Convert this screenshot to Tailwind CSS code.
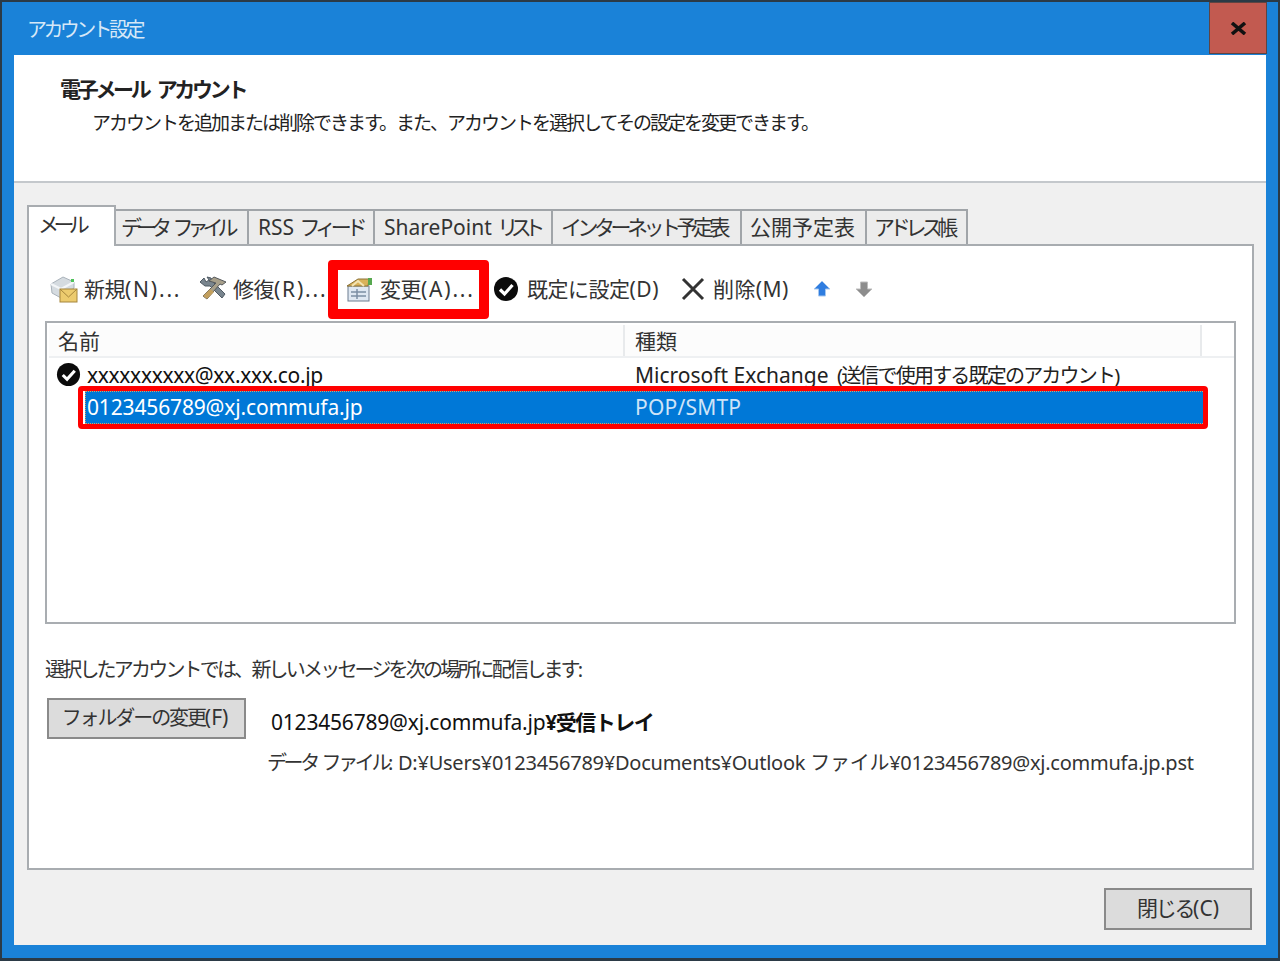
<!DOCTYPE html>
<html lang="ja">
  <head>
    <meta charset="UTF-8">
    <script src="https://cdn.jsdelivr.net/npm/@tailwindcss/browser@4"></script>
    <title>アカウント設定</title>
  </head>
  <body class="m-0 bg-[#1a82d8] font-['Noto_Sans','Noto_Sans_CJK_JP',sans-serif] text-[#111]">
    <div class="relative w-[1280px] h-[961px] flex flex-col border-2 border-b-[3px] border-[#2b3a46] bg-[#1a82d8] overflow-hidden">
      <!-- Title bar -->
      <div class="h-[53px] flex shrink-0">
        <div class="flex-1 pl-[25px] pt-[13px] text-[20px] leading-[30px] tracking-[-3.6px] text-[#d6e8f7]">アカウント設定</div>
        <div class="w-[58px] h-[52px] mr-[11px] flex items-center justify-center bg-[#c25a50] border border-[#5e4442]">
          <svg width="17" height="13" viewBox="0 0 17 13"><path d="M2 1 L15 12 M15 1 L2 12" stroke="#111" stroke-width="3.6" fill="none"/></svg>
        </div>
      </div>

      <div class="mx-[12px] flex-1 flex flex-col mb-[13px] bg-[#f0f0f0]">
        <!-- Header -->
        <div class="h-[128px] shrink-0 bg-white border-b-2 border-[#c4c8cc] pl-[46px] pt-[19px]">
          <div class="text-[21px] leading-[30px] font-bold tracking-[-3.3px] [word-spacing:6px] text-[#222]">電子メール アカウント</div>
          <div class="pl-[32px] mt-[4px] text-[19px] leading-[30px] tracking-[-2px] text-[#222]">アカウントを追加または削除できます。また、アカウントを選択してその設定を変更できます。</div>
        </div>

        <!-- Tabs -->
        <div class="pl-[13px] flex items-end h-[61px] shrink-0 text-[21px] leading-[30px] text-[#333]">
          <div class="relative z-10 w-[89px] h-[41px] -mb-[2px] bg-white border-2 border-b-0 border-[#a8acb0] pl-[9px] pt-[2px] tracking-[-5.6px]">メール</div>
          <div class="w-[133px] h-[35px] bg-[#ececec] border-2 border-b-0 border-l-0 border-[#a0a4a8] pl-[5px] pt-[1px] whitespace-nowrap tracking-[-6px] [word-spacing:7px]">データ ファイル</div>
          <div class="w-[126px] h-[35px] bg-[#ececec] border-2 border-b-0 border-l-0 border-[#a0a4a8] pl-[9px] pt-[1px] whitespace-nowrap">RSS <span class="tracking-[-5.2px]">フィード</span></div>
          <div class="w-[178px] h-[35px] bg-[#ececec] border-2 border-b-0 border-l-0 border-[#a0a4a8] pl-[9px] pt-[1px] whitespace-nowrap">SharePoint <span class="tracking-[-7.5px]">リスト</span></div>
          <div class="w-[189px] h-[35px] bg-[#ececec] border-2 border-b-0 border-l-0 border-[#a0a4a8] pl-[8px] pt-[1px] whitespace-nowrap tracking-[-4.5px]">インターネット予定表</div>
          <div class="w-[125px] h-[35px] bg-[#ececec] border-2 border-b-0 border-l-0 border-[#a0a4a8] pl-[8px] pt-[1px] whitespace-nowrap">公開予定表</div>
          <div class="w-[101px] h-[35px] bg-[#ececec] border-2 border-b-0 border-l-0 border-[#a0a4a8] pl-[7px] pt-[1px] whitespace-nowrap tracking-[-5.2px]">アドレス帳</div>
        </div>

        <!-- Tab panel -->
        <div class="mx-[13px] w-[1227px] h-[626px] shrink-0 bg-white border-2 border-[#a8acb0] flex flex-col">
          <!-- Toolbar -->
          <div class="h-[75px] shrink-0 pl-[20px] pt-[10px] flex text-[21px] leading-[32px] text-[#333] whitespace-nowrap">
            <div class="w-[149px] flex items-center">
              <svg class="w-[30px] h-[30px] mr-[5px]" viewBox="0 0 30 30">
                <path d="M2 10 L14 3 L25 8 L25 14 L12 24 L3 19 Z" fill="#d5dbe0" stroke="#a9b2ba"/>
                <path d="M2 10 L12 15 L25 8" fill="none" stroke="#f4f6f8" stroke-width="2"/>
                <rect x="11" y="15" width="17" height="13" fill="#eccb6e" stroke="#a5853c"/>
                <path d="M11 15 L19.5 23 L28 15" fill="none" stroke="#a5853c"/>
                <rect x="22" y="5" width="3" height="3" fill="#4fc25a"/>
              </svg>
              <span class="tracking-[-0.5px]">新規<span class="tracking-[1.8px]">(N)...</span></span>
            </div>
            <div class="w-[147px] flex items-center">
              <svg class="w-[30px] h-[30px] mr-[5px]" viewBox="0 0 30 30">
                <path d="M2 8 L6 4 L8 8 L11 6 L9 3 L13 4 L15 8 L27 20 L24 24 L12 12 L7 12 Z" fill="#79858e" stroke="#4f5a63"/>
                <path d="M11 7 L16 3 L28 8 L24 11 L22 10 L9 25 L5 22 L18 9 Z" fill="#a79f8a" stroke="#54585c"/>
                <path d="M9 25 L5 22 L12 15 L16 18 Z" fill="#c29f5e"/>
              </svg>
              <span class="tracking-[-0.5px]">修復<span class="tracking-[1.8px]">(R)...</span></span>
            </div>
            <div class="w-[148px] flex items-center">
              <svg class="w-[29px] h-[28px] mr-[6px]" viewBox="0 0 29 28">
                <rect x="3" y="11" width="21" height="15" fill="#dfe8f2" stroke="#6c7d90"/>
                <path d="M6 17 H21 M6 21 H21 M12 14 V24" stroke="#7c8ea4" stroke-width="1.5"/>
                <path d="M2 11 L13 4 L24 4 L23 11 Z" fill="#d9b25a" stroke="#8c7236"/>
                <path d="M7 11 L13 6 L19 11" fill="none" stroke="#f2e4b4" stroke-width="2"/>
                <rect x="23" y="3" width="4" height="7" fill="#57a84f"/>
              </svg>
              <span class="tracking-[-0.5px]">変更<span class="tracking-[1.8px]">(A)...</span></span>
            </div>
            <div class="w-[188px] flex items-center">
              <svg class="w-[26px] h-[26px] mr-[8px]" viewBox="0 0 26 26">
                <circle cx="13" cy="13" r="12" fill="#0b0b0b"/>
                <path d="M7 13.5 L11.5 18 L19.5 9" fill="none" stroke="#fff" stroke-width="3.2"/>
              </svg>
              <span class="tracking-[-0.5px]">既定に設定<span class="tracking-[0.5px]">(D)</span></span>
            </div>
            <div class="w-[132px] flex items-center">
              <svg class="w-[24px] h-[24px] mr-[8px]" viewBox="0 0 24 24">
                <path d="M2 2 L22 22 M22 2 L2 22" stroke="#333" stroke-width="3" fill="none"/>
              </svg>
              <span class="tracking-[0.4px]">削除(M)</span>
            </div>
            <div class="w-[42px] flex items-center">
              <svg class="w-[18px] h-[18px]" viewBox="0 0 18 18">
                <path d="M9 1 L17 9 L12.5 9 L12.5 16 L5.5 16 L5.5 9 L1 9 Z" fill="#2f7de0" stroke="#a7c8ef"/>
              </svg>
            </div>
            <div class="flex items-center">
              <svg class="w-[18px] h-[18px]" viewBox="0 0 18 18">
                <path d="M5.5 2 L12.5 2 L12.5 9 L17 9 L9 17 L1 9 L5.5 9 Z" fill="#8d8d8d" stroke="#bdbdbd"/>
              </svg>
            </div>
          </div>

          <!-- Account list -->
          <div class="relative mx-[16px] h-[303px] shrink-0 border-2 border-[#a9adb1] pl-[2px] pt-[2px]">
            <div class="flex h-[33px] border-b-2 border-[#eef0f2] text-[21px] leading-[32px] text-[#333]">
              <div class="w-[576px] pl-[9px] border-r-2 border-[#e8eaec] bg-[#fcfcfc]">名前</div>
              <div class="w-[577px] pl-[10px] border-r-2 border-[#e8eaec] bg-[#fcfcfc]">種類</div>
            </div>
            <div class="flex h-[33px] text-[21px] leading-[35px] text-[#222]">
              <div class="w-[38px] pl-[7px] pt-[4px] shrink-0">
                <svg class="w-[25px] h-[25px]" viewBox="0 0 26 26">
                  <circle cx="13" cy="13" r="12" fill="#0b0b0b"/>
                  <path d="M7 13.5 L11.5 18 L19.5 9" fill="none" stroke="#fff" stroke-width="3.2"/>
                </svg>
              </div>
              <div class="w-[548px] text-[#111] tracking-[-0.33px]">xxxxxxxxxx@xx.xxx.co.jp</div>
              <div class="whitespace-nowrap">Microsoft Exchange <span class="ml-[3px] text-[20px] tracking-[-1.8px]">(送信で使用する既定のアカウント)</span></div>
            </div>
            <div class="ml-[36px] mr-[29px] flex h-[33px] bg-[#0078d7] outline outline-1 -outline-offset-1 outline-dotted outline-[#d9a066] text-[21px] leading-[33px] text-white">
              <div class="w-[550px] pl-[2px] tracking-[-0.15px]">0123456789@xj.commufa.jp</div>
              <div class="text-[#cfe4f7] tracking-[0.2px]">POP/SMTP</div>
            </div>
          </div>

          <!-- Delivery -->
          <div class="pl-[16px] pt-[31px] text-[20px] leading-[30px] text-[#333] tracking-[-2.8px]">選択したアカウントでは、新しいメッセージを次の場所に配信します:</div>
          <div class="flex pl-[18px] pt-[13px]">
            <div class="w-[199px] h-[41px] pr-[3px] shrink-0 bg-[#dcdcdc] border-2 border-[#8a8a8a] text-center text-[20px] leading-[34px] text-[#333] tracking-[-2.1px]">フォルダーの変更<span class="text-[21px] tracking-normal">(F)</span></div>
            <div class="pl-[25px] whitespace-nowrap">
              <div class="pt-[9px] text-[21px] leading-[30px] text-[#111] tracking-[-0.2px]">0123456789@xj.commufa.jp<span class="font-bold tracking-[-1.5px]">¥受信トレイ</span></div>
              <div class="-ml-[4px] pt-[11px] text-[20px] leading-[30px] text-[#333] tracking-[-0.25px]"><span class="inline-block w-[131px] tracking-[-3.4px] [word-spacing:3px]">データ ファイル:</span>D:¥Users¥0123456789¥Documents¥Outlook ファイル¥0123456789@xj.commufa.jp.pst</div>
            </div>
          </div>
        </div>

        <!-- Footer -->
        <div class="flex justify-end pr-[14px] pt-[18px]">
          <div class="w-[148px] h-[42px] bg-[#dcdcdc] border-2 border-[#8a8a8a] text-center text-[21px] leading-[36px] text-[#333] tracking-[-2.3px]">閉じる<span class="tracking-normal">(C)</span></div>
        </div>
      </div>

      <!-- Red highlights -->
      <div class="absolute left-[326px] top-[258px] w-[161px] h-[59px] border-[10px] border-[#f00] rounded-[4px]"></div>
      <div class="absolute left-[76px] top-[384px] w-[1130px] h-[43px] border-[5px] border-[#f00] rounded-[4px]"></div>
    </div>
  </body>
</html>
